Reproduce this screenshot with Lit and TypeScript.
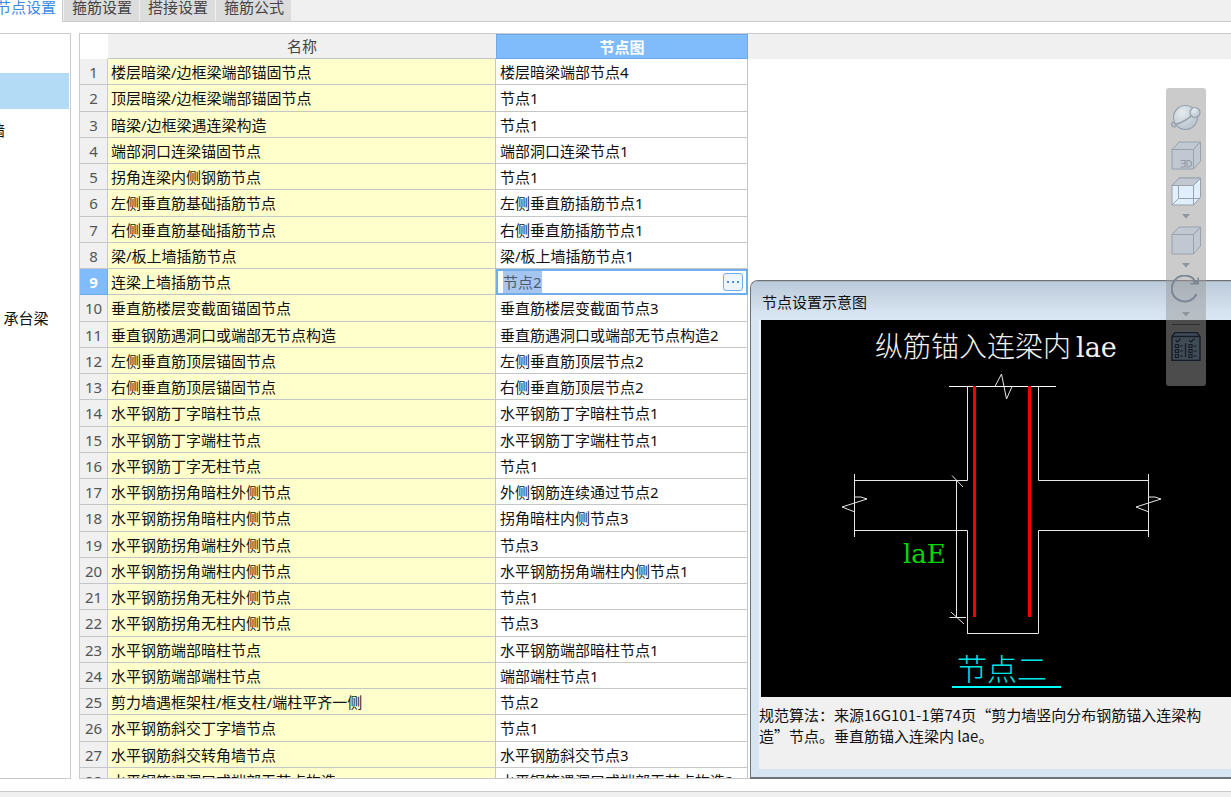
import { LitElement, html, css, svg } from "lit";
import { customElement, query } from "lit/decorators.js";
import { classMap } from "lit/directives/class-map.js";

const TABS = ["节点设置", "箍筋设置", "搭接设置", "箍筋公式"];

const CATEGORIES = ["柱", "剪力墙", "人防门框墙", "连梁", "框架梁", "非框架梁", "板", "基础主梁 / 承台梁"];

const ROWS: [string, string][] = [
  ["楼层暗梁/边框梁端部锚固节点", "楼层暗梁端部节点4"],
  ["顶层暗梁/边框梁端部锚固节点", "节点1"],
  ["暗梁/边框梁遇连梁构造", "节点1"],
  ["端部洞口连梁锚固节点", "端部洞口连梁节点1"],
  ["拐角连梁内侧钢筋节点", "节点1"],
  ["左侧垂直筋基础插筋节点", "左侧垂直筋插筋节点1"],
  ["右侧垂直筋基础插筋节点", "右侧垂直筋插筋节点1"],
  ["梁/板上墙插筋节点", "梁/板上墙插筋节点1"],
  ["连梁上墙插筋节点", "节点2"],
  ["垂直筋楼层变截面锚固节点", "垂直筋楼层变截面节点3"],
  ["垂直钢筋遇洞口或端部无节点构造", "垂直筋遇洞口或端部无节点构造2"],
  ["左侧垂直筋顶层锚固节点", "左侧垂直筋顶层节点2"],
  ["右侧垂直筋顶层锚固节点", "右侧垂直筋顶层节点2"],
  ["水平钢筋丁字暗柱节点", "水平钢筋丁字暗柱节点1"],
  ["水平钢筋丁字端柱节点", "水平钢筋丁字端柱节点1"],
  ["水平钢筋丁字无柱节点", "节点1"],
  ["水平钢筋拐角暗柱外侧节点", "外侧钢筋连续通过节点2"],
  ["水平钢筋拐角暗柱内侧节点", "拐角暗柱内侧节点3"],
  ["水平钢筋拐角端柱外侧节点", "节点3"],
  ["水平钢筋拐角端柱内侧节点", "水平钢筋拐角端柱内侧节点1"],
  ["水平钢筋拐角无柱外侧节点", "节点1"],
  ["水平钢筋拐角无柱内侧节点", "节点3"],
  ["水平钢筋端部暗柱节点", "水平钢筋端部暗柱节点1"],
  ["水平钢筋端部端柱节点", "端部端柱节点1"],
  ["剪力墙遇框架柱/框支柱/端柱平齐一侧", "节点2"],
  ["水平钢筋斜交丁字墙节点", "节点1"],
  ["水平钢筋斜交转角墙节点", "水平钢筋斜交节点3"],
  ["水平钢筋遇洞口或端部无节点构造", "水平钢筋遇洞口或端部无节点构造2"],
];

const ACTIVE_ROW = 8;

@customElement("node-table")
export class NodeTable extends LitElement {
  static styles = css`
    :host { display: block; overflow: hidden; background: #fff; border: 1px solid #c8cacd; border-right: 0; }
    table { width: 100%; table-layout: fixed; border-collapse: separate; border-spacing: 0; }
    .c-num { width: 28px; }
    .c-name { width: 388px; }
    .c-node { width: 252px; }
    th, td { box-sizing: border-box; height: 26px; padding: 0; overflow: hidden; white-space: nowrap; line-height: 24px;
      font-weight: 400; border-bottom: 1px solid #c4c7ca; }
    thead th, thead td { height: 25px; line-height: 22px; background: #f0f0f0; color: #444; text-align: center; }
    thead .corner { background: #fff; border-bottom-color: #fff; }
    thead .fill { border-bottom-color: #f0f0f0; }
    thead .active { background: #80bbfb; color: #fff; font-weight: 700; border: 1px solid #6ba9ea; }
    tbody tr:nth-child(4n + 2) > * { height: 27px; }
    .num { background: #f0f0f0; color: #555; text-align: center; border-right: 1px solid #c8cacd; }
    .num.active { background: #80bbfb; color: #fff; font-weight: 700; border-color: #6ba9ea; }
    .name { background: #ffffcc; padding-left: 3px; border-right: 1px solid #c4c7ca; }
    .node { padding-left: 4px; border-right: 1px solid #c4c7ca; }
    .fill { border-bottom-color: transparent; }
    .node.editing { padding: 0; border: 0; }
    .editor { display: flex; align-items: center; box-sizing: border-box; height: 26px; padding: 0 3px 0 5px;
      border: 2px solid #70aeeb; background: #fff; }
    .editor input { flex: 1; min-width: 0; height: 22px; padding: 0; border: 0; outline: 0; background: none;
      font: inherit; line-height: 22px; color: #444; }
    .editor input::selection { background: #a6c6f0; color: #4d5b70; }
    .more { display: flex; align-items: center; justify-content: center; width: 20px; height: 18px; padding: 0;
      border: 1px solid #70aeeb; border-radius: 3px; background: #edf5fd; }
  `;

  @query("input") field!: HTMLInputElement;

  firstUpdated() {
    this.field.focus();
    this.field.select();
  }

  render() {
    return html`
      <table>
        <colgroup><col class="c-num" /><col class="c-name" /><col class="c-node" /><col /></colgroup>
        <thead>
          <tr>
            <td class="corner"></td>
            <th scope="col">名称</th>
            <th scope="col" class="active">节点图</th>
            <td class="fill"></td>
          </tr>
        </thead>
        <tbody>
          ${ROWS.map(([name, node], i) => html`
            <tr>
              <th scope="row" class=${classMap({ num: true, active: i === ACTIVE_ROW })}>${i + 1}</th>
              <td class="name">${name}</td>
              ${i === ACTIVE_ROW
                ? html`<td class="node editing">
                    <div class="editor">
                      <input type="text" aria-label=${name} .value=${node} />
                      <button class="more" aria-label="选择节点图">
                        <svg width="14" height="4" viewBox="0 0 14 4" fill="#4d8fd6">
                          <rect x="1" y="1" width="2" height="2" /><rect x="6" y="1" width="2" height="2" /><rect x="11" y="1" width="2" height="2" />
                        </svg>
                      </button>
                    </div>
                  </td>`
                : html`<td class="node">${node}</td>`}
              <td class="fill"></td>
            </tr>`)}
        </tbody>
      </table>
    `;
  }
}

@customElement("node-preview")
export class NodePreview extends LitElement {
  static styles = css`
    :host { display: flex; flex-direction: column; box-sizing: border-box; overflow: hidden; background: #d7e4f1;
      border: 1px solid #6f7275; border-right: 0; border-bottom-width: 2px; border-radius: 8px 0 0 0; }
    h2 { margin: 0; padding: 4px 0 0 11px; height: 34px; line-height: 32px; font-size: 15px; font-weight: 400;
      background: linear-gradient(#bccbda, #d7e4f1 85%); border-top: 1px solid #a9b5c0; }
    .body { flex: 1; margin: 0 0 8px 8px; background: #f0f0f0; }
    .canvas { display: block; margin-left: 2px; background: #000; overflow: hidden; height: 377px; }
    .canvas svg { display: block; width: 470px; height: 377px; }
    .title { font-family: "Noto Sans CJK SC", sans-serif; font-weight: 300; font-size: 28px; fill: #f2f2f2; }
    .latin { font-family: "DejaVu Serif", serif; font-weight: 400; font-size: 27px; }
    .mark { font-family: "DejaVu Serif", serif; font-size: 26px; fill: #00d800; }
    .caption { font-family: "Noto Sans CJK SC", sans-serif; font-weight: 300; font-size: 30px; fill: #00e5e5; }
    p { margin: 0; padding: 7px 18px 0 0; line-height: 21px; font-size: 15px;
      font-family: "Noto Sans CJK SC", sans-serif; }
  `;

  render() {
    return html`
      <h2>节点设置示意图</h2>
      <div class="body">
        <div class="canvas">
          <svg viewBox="0 0 470 377" role="img" aria-label="节点二">
            <g fill="none" stroke="#e6e6e6" stroke-width="1">
              <path d="M188 66.5H295" stroke="#fff" />
              <path d="M234 66.5L240.500 54L245.500 79L251 66.500" />
              <path d="M206.500 66V160.500H94M206.500 314V210.500H94M93.500 154V217" />
              <path d="M277.500 66V160.500H388M206.500 313.500H277.500V210.500H388M387.500 154V217" />
              <path d="M94 177H100L106 179L81 187L94 192" />
              <path d="M388 177H394L400 179L375 187L388 192" />
              <path d="M195.500 160V297M191 155.500L202 167M190 292L203 304M188.500 297.500H205" />
            </g>
            <path d="M213.500 66V297M268.500 66V297" stroke="#f50000" stroke-width="3" />
            <text class="title" x="114" y="37">纵筋锚入连梁内<tspan class="latin" dx="5">lae</tspan></text>
            <text class="mark" x="142" y="243">laE</text>
            <text class="caption" x="196" y="360">节点二</text>
            <path d="M191 367H300" stroke="#00ffff" stroke-width="2" />
          </svg>
        </div>
        <p>规范算法：来源16G101-1第74页“剪力墙竖向分布钢筋锚入连梁构造”节点。垂直筋锚入连梁内 lae。</p>
      </div>
    `;
  }
}

const cube = svg`<path d="M1 8.500H22.500V28H1Z" /><path d="M1 8.500L8 1H29.500L22.500 8.500Z" /><path d="M22.500 8.500L29.500 1V20L22.500 28Z" />`;

@customElement("view-toolbar")
export class ViewToolbar extends LitElement {
  static styles = css`
    :host { display: flex; flex-direction: column; align-items: center; box-sizing: border-box; width: 40px;
      padding: 16px 5px 25px; border-radius: 3px; background: rgba(152, 152, 152, 0.5); }
    button { display: block; width: 30px; height: 29px; padding: 0; border: 0; background: none; }
    button svg { display: block; }
    .solid { margin: 8px 0 7px; }
    .drop { height: 20px; display: flex; align-items: center; justify-content: center; }
    .rule { width: 28px; height: 1px; margin-bottom: 7px; background: #2b2d30; }
  `;

  private drop(label: string) {
    return html`<button class="drop" aria-label=${label}>
      <svg width="8" height="5" viewBox="0 0 8 5"><path d="M0 0H8L4 4.500Z" fill="#8d959d" /></svg>
    </button>`;
  }

  render() {
    return html`
      <button aria-label="动态观察">
        <svg width="30" height="29" viewBox="0 0 30 29">
          <defs><radialGradient id="ball" cx=".35" cy=".3" r=".8"><stop offset="0" stop-color="#e6ebf0" /><stop offset="1" stop-color="#b4bfca" /></radialGradient></defs>
          <g stroke="#98a2ae" stroke-width="1.200">
            <circle cx="3" cy="20.500" r="2.500" fill="#b5bdc6" />
            <circle cx="14.500" cy="13.500" r="12" fill="url(#ball)" />
            <path d="M4 20.500C10 19 18 15 21 11" fill="none" stroke-width="1.600" />
            <circle cx="24" cy="8.500" r="5" fill="url(#ball)" />
          </g>
        </svg>
      </button>
      <button class="solid" aria-label="三维视图">
        <svg width="30" height="29" viewBox="0 0 30 29">
          <g fill="#c1c8d1" stroke="#98a2ae">${cube}</g>
          <path d="M9.500 19.500H14V26H9.500M10.500 22.500H14M16 19.500H18.500L20.500 21.500V24L18.500 26H16Z" fill="none" stroke="#949ba4" stroke-width="1.200" />
        </svg>
      </button>
      <button aria-label="线框视图">
        <svg width="30" height="29" viewBox="0 0 30 29">
          <g fill="#e1effc" stroke="#98a2ae">${cube}
            <path d="M1 8.500L8 1H29.500L22.500 8.500Z" fill="#c1c8d1" />
            <path d="M7.500 8.500V21.500H29M7.500 21.500L1 28M22.500 8.500V28" fill="none" />
          </g>
        </svg>
      </button>
      ${this.drop("线框视图选项")}
      <button aria-label="实体视图">
        <svg width="30" height="29" viewBox="0 0 30 29"><g fill="#c1c8d1" stroke="#98a2ae">${cube}</g></svg>
      </button>
      ${this.drop("实体视图选项")}
      <button aria-label="旋转">
        <svg width="30" height="29" viewBox="0 0 30 29">
          <path d="M25.500 19A13 13 0 1 1 23.500 5" fill="none" stroke="#7b8794" stroke-width="2" />
          <path d="M28 2.500V9.500H19.500V8H23L21.500 6L23.500 4.500L26.500 6.500V2.500Z" fill="#7b8794" />
        </svg>
      </button>
      ${this.drop("旋转选项")}
      <div class="rule"></div>
      <button aria-label="显示设置">
        <svg width="30" height="29" viewBox="0 0 30 29" fill="none" stroke="#171d25">
          <path d="M1 4.500L4 .5H26L29 4.500V28.500H1Z" fill="#404b58" stroke-width="1.400" />
          <path d="M1 4.500H29" stroke-width="1.400" />
          <path d="M4.500 8L6.500 10L9.500 6.500M18 8L20 10L23.500 6.500M14.500 11V25" stroke-width="1.200" />
          <path d="M4.500 12.500h3v3h-3zM4.500 17.500h3v3h-3zM4.500 22.500h3v3h-3zM18 12.500h3v3h-3zM18 17.500h3v3h-3zM18 22.500h3v3h-3zM9 14H12M9 19H12M9 24H12M22.500 14H25.500M22.500 19H25.500M22.500 24H25.500" stroke-width="1.200" />
        </svg>
      </button>
    `;
  }
}

@customElement("app-root")
export class AppRoot extends LitElement {
  static styles = css`
    :host { display: flex; flex-direction: column; position: relative; box-sizing: border-box; height: 100vh; overflow: hidden;
      background: #fff; color: #111; font: 15px "Noto Sans", "Noto Sans CJK SC", sans-serif; }
    .tabs { display: flex; height: 21px; margin-left: -12px; background: #f0f0f0; border-bottom: 1px solid #c8cacd; }
    .tab { box-sizing: border-box; height: 21px; margin-right: 1px; padding: 0 7px 6px 8px; border: 0; background: #dcdcdc;
      color: #444; font: inherit; line-height: 15px; white-space: nowrap; }
    .tab.on { height: 22px; padding: 0 6px 9px 8px; border-right: 1px solid #c8cacd; background: #fff; color: #3b8ae6; }
    .main { flex: 1; min-height: 0; display: flex; gap: 8px; margin: 11px 0 12px; }
    .side { box-sizing: border-box; width: 71px; overflow: hidden; border: 1px solid #c8cacd; border-left: 0; }
    .side ul { margin: 0 1px 0 -70px; padding: 2px 0 0; list-style: none; }
    .side li { margin-bottom: 2px; }
    .side li:nth-child(3n + 1) { margin-bottom: 1px; }
    .side button { display: block; width: 100%; height: 36px; padding: 0; border: 0; background: none;
      font: inherit; color: inherit; text-align: left; white-space: nowrap; }
    .side .on { background: #b3dbf6; }
    node-table { flex: 1; min-width: 0; }
    .status { height: 5px; background: #f0f0f0; border-top: 1px solid #c8cacd; }
    node-preview { position: absolute; left: 750px; right: 0; top: 280px; height: 499px; }
    view-toolbar { position: absolute; right: 25px; top: 88px; }
  `;

  render() {
    return html`
      <nav class="tabs" lang="zh-CN">
        ${TABS.map((t, i) => html`<button class=${classMap({ tab: true, on: i === 0 })}>${t}</button>`)}
      </nav>
      <div class="main" lang="zh-CN">
        <aside class="side">
          <ul>${CATEGORIES.map((c, i) => html`<li><button class=${classMap({ on: i === 1 })}>${c}</button></li>`)}</ul>
        </aside>
        <node-table></node-table>
      </div>
      <div class="status"></div>
      <node-preview lang="zh-CN"></node-preview>
      <view-toolbar></view-toolbar>
    `;
  }
}
